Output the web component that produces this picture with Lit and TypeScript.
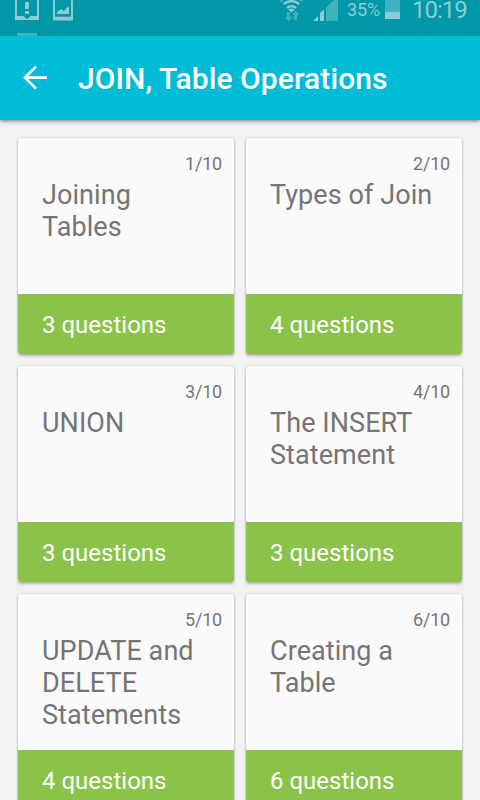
import { LitElement, html, css } from "lit";
import { customElement, property } from "lit/decorators.js";

@customElement("status-bar")
class StatusBar extends LitElement {
  static styles = css`
    :host { display: flex; height: 36px; background: #0097a7; position: relative; color: #8ccdd5;
      font-family: Roboto, sans-serif; justify-content: space-between; overflow: hidden; }
    svg { display: block; flex: none; }
    .right { display: flex; }
    .pct { font-size: 18px; line-height: 20px; width: 38px; margin-left: 8px; white-space: nowrap; letter-spacing: -0.1px; }
    .clock { font-size: 24px; line-height: 20px; width: 68px; margin-left: 12px; white-space: nowrap; letter-spacing: -1px; }
    .dim { fill: #40b1bd; }
    .lit { fill: #8ccdd5; }
    .bg { fill: #0097a7; }
    .arc { fill: none; stroke: #8ccdd5; stroke-width: 2.2; }
    .far { stroke: #40b1bd; }
  `;
  render() {
    return html`
      <svg width="120" height="36" viewBox="0 0 120 36">
        <rect class="lit" x="15" y="-4" width="24" height="24"></rect>
        <path class="bg" d="M17 -4H37V16H31L27 19L23 16H17Z"></path>
        <rect class="lit" x="25" y="2" width="4" height="7" rx="1"></rect>
        <rect class="lit" x="25" y="11" width="4" height="3" rx="1"></rect>
        <rect class="lit" x="53" y="-4" width="20" height="24.5"></rect>
        <rect class="bg" x="55" y="-4" width="16" height="20.7"></rect>
        <path class="lit" d="M57 14V12L61 9L64 11L67 7.5L69 7V14Z"></path>
        <rect class="dim" x="17" y="33" width="20" height="3"></rect>
      </svg>
      <div class="right">
        <svg width="60" height="36" viewBox="279 0 60 36">
          <path class="arc far" d="M280.5 1.5A16 16 0 0 1 302.5 1.5"></path>
          <path class="arc" d="M283.8 4.3A11 11 0 0 1 299.2 4.3"></path>
          <path class="arc" d="M287 8A6.2 6.2 0 0 1 296 8"></path>
          <path class="lit" d="M288.3 9.6Q291.5 7.5 294.7 9.6L291.5 12.5Z"></path>
          <path class="dim" d="M287 12H290V17H292L288.5 21.5L285 17H287Z M294 20V15H292L295.7 10.5L299.3 15H297V20Z"></path>
          <path class="lit" d="M313 21L318 16V21ZM320 21V13L324 9.5V21Z"></path>
          <path class="dim" d="M326 21V7.5L338 -4V21Z"></path>
        </svg>
        <div class="pct">35%</div>
        <svg width="15" height="36" viewBox="0 0 15 36">
          <rect class="dim" width="15" height="12"></rect>
          <rect class="lit" y="12" width="15" height="7"></rect>
        </svg>
        <div class="clock">10:19</div>
      </div>`;
  }
}

@customElement("lesson-card")
class LessonCard extends LitElement {
  @property() name = "";
  @property({ type: Number }) index = 1;
  @property({ type: Number }) questions = 3;
  static styles = css`
    :host { display: flex; flex-direction: column; height: 216px; border-radius: 3px; overflow: hidden;
      background: #fafafa; box-shadow: 0 2px 3px rgba(0,0,0,.26), 0 0 2px rgba(0,0,0,.2); color: #757575; }
    .count { font-size: 18px; line-height: 22px; text-align: right; padding: 15px 12px 0 0; letter-spacing: -0.2px; }
    .name { flex: 1; font-size: 27px; line-height: 32px; padding: 4px 20px 0 24px; letter-spacing: 0.08px; }
    .foot { height: 60px; box-sizing: border-box; background: #8bc34a; color: #fff; font-size: 24px;
      line-height: 60px; padding: 1px 24px 0; }
  `;
  render() {
    return html`<div class="count">${this.index}/10</div>
      <div class="name">${this.name}</div>
      <div class="foot">${this.questions} questions</div>`;
  }
}

@customElement("app-root")
class AppRoot extends LitElement {
  static styles = css`
    :host { display: flex; flex-direction: column; width: 480px; height: 800px; overflow: hidden;
      background: #f2f2f2; font-family: Roboto, sans-serif; }
    status-bar, .bar { flex: none; }
    .bar { display: flex; align-items: center; height: 84px; background: #00bcd7; color: #fff;
      box-shadow: 0 1px 4px rgba(0,0,0,.5); }
    .back { margin-left: 22px; width: 56px; height: 26px; fill: none; stroke: #fff; stroke-width: 2.6; }
    .title { font-size: 30px; font-weight: 500; line-height: 36px; padding-top: 2px; white-space: nowrap; letter-spacing: 0.08px; }
    .grid { display: grid; grid-template-columns: 216px 216px; gap: 12px; padding: 18px; }
  `;
  private lessons: [string, number][] = [
    ["Joining Tables", 3],
    ["Types of Join", 4],
    ["UNION", 3],
    ["The INSERT Statement", 3],
    ["UPDATE and DELETE Statements", 4],
    ["Creating a Table", 6],
  ];
  render() {
    return html`
      <status-bar></status-bar>
      <div class="bar">
        <svg class="back" viewBox="0 0 56 26"><path d="M25 12.6H3M14 1.6L3 12.6L14 23.6"></path></svg>
        <div class="title">JOIN, Table Operations</div>
      </div>
      <div class="grid">
        ${this.lessons.map(([name, n], i) => html`<lesson-card .name=${name} .index=${i + 1} .questions=${n}></lesson-card>`)}
      </div>`;
  }
}
